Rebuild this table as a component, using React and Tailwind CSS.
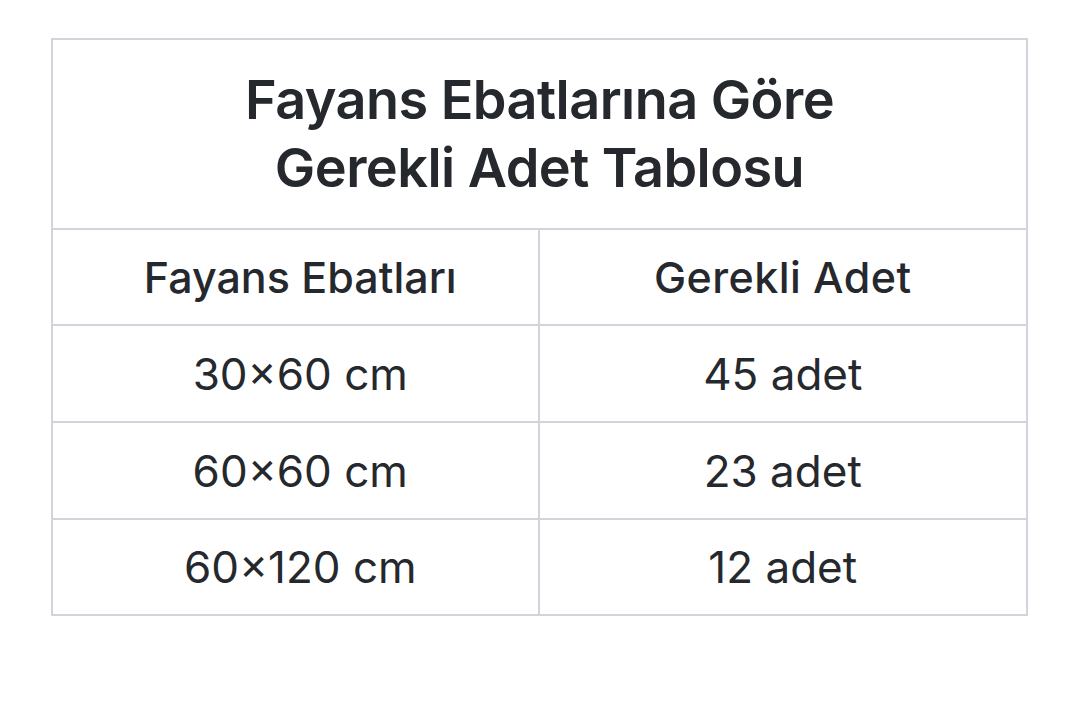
export default function App() {
  const rows = [
    ["30×60 cm", "45 adet"],
    ["60×60 cm", "23 adet"],
    ["60×120 cm", "12 adet"],
  ];
  return (
    <div className="w-[1080px] h-[720px] bg-white pt-[38px] pl-[51px]" style={{ fontFamily: "Inter, 'Noto Sans', sans-serif" }}>
      <div className="w-[977px] border-2 border-[#d1d5db] text-[#25282d]">
        <div className="h-[190px] flex items-center justify-center text-center border-b-2 border-[#d1d5db] font-semibold text-[54px] leading-[68px] tracking-[-0.01em]">
          <div>Fayans Ebatlarına Göre<br />Gerekli Adet Tablosu</div>
        </div>
        <div className="grid grid-cols-2 h-[96px] border-b-2 border-[#d1d5db] font-medium text-[43px]">
          <div className="flex items-center justify-center pl-[10px] border-r-2 border-[#d1d5db]">Fayans Ebatları</div>
          <div className="flex items-center justify-center tracking-[0.01em]">Gerekli Adet</div>
        </div>
        {rows.map((r, i) => (
          <div key={i} className={`grid grid-cols-2 text-[44px] ${i < rows.length - 1 ? "h-[97px] border-b-2 border-[#d1d5db]" : "h-[94px]"}`}>
            <div className="flex items-center justify-center pl-[10px] border-r-2 border-[#d1d5db]">{r[0]}</div>
            <div className="flex items-center justify-center">{r[1]}</div>
          </div>
        ))}
      </div>
    </div>
  );
}
